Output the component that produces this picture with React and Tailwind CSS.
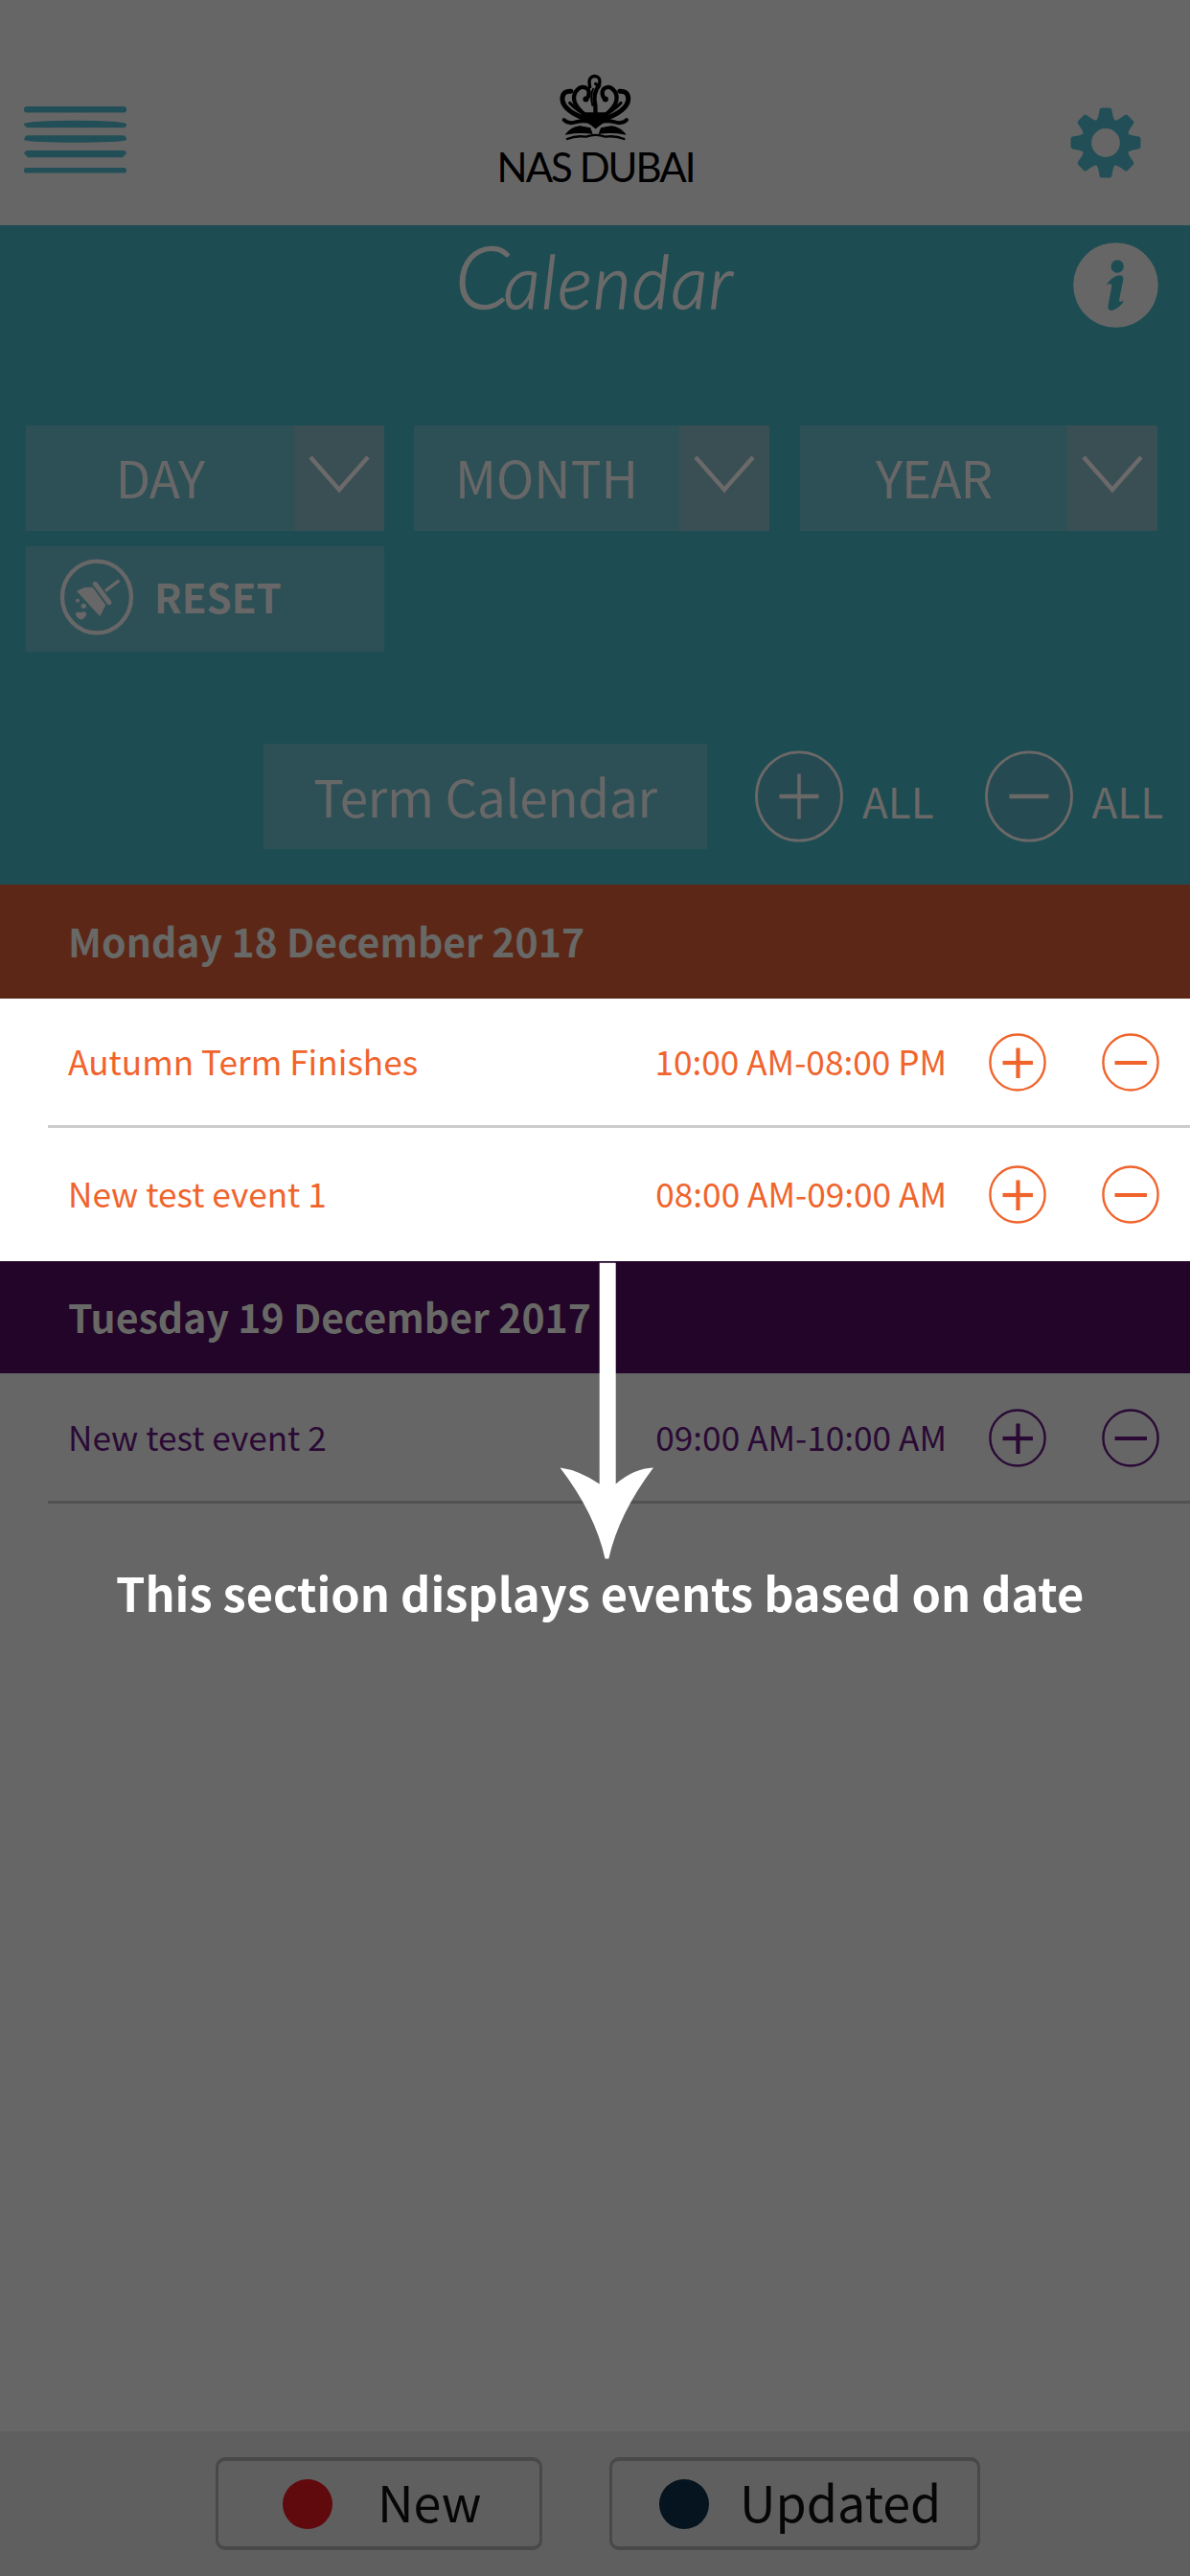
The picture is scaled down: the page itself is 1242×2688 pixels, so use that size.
import React from 'react';

const FONT = "font-['Noto_Sans_CJK_SC','Noto_Sans',sans-serif]";

function MenuIcon() {
  return (
    <svg width="110" height="72" viewBox="0 0 110 72" fill="#224f57">
      <rect x="1" y="2" width="107" height="6.5" rx="3" />
      <path d="M1 20Q8 17 55 16.8Q101 17 108 20Q108 24.3 105 24.3H5Q1 23 1 20Z" />
      <path d="M4 32.3H105Q108 33 108 37Q101 39.7 55 39.7Q8 39.7 1 37Q2 33 4 32.3Z" />
      <path d="M4 48H105Q108 48.5 108 51L104 55.3H5L1 51Q2 48.5 4 48Z" />
      <rect x="1" y="66" width="107" height="5.6" rx="2.6" />
    </svg>
  );
}

function Crown() {
  return (
    <svg width="76" height="70" viewBox="305 50 230 212" fill="none" stroke="#000" strokeLinecap="round">
      <path d="M404 92Q396 60 418 57Q437 58 435 78Q431 90 422 82" strokeWidth="10" />
      <path d="M433 86Q412 112 421 150L422 190" strokeWidth="13" />
      <path d="M414 98Q404 120 412 150" strokeWidth="6" />
      <path d="M405 192Q338 146 358 108Q376 82 397 98Q406 112 394 130" strokeWidth="13" />
      <path d="M437 192Q504 146 484 108Q466 82 447 98Q438 112 450 130" strokeWidth="13" />
      <path d="M398 196Q320 168 317 132Q315 104 344 105" strokeWidth="15" />
      <path d="M444 196Q522 168 525 132Q527 104 498 105" strokeWidth="15" />
      <path d="M404 186Q366 170 340 142" strokeWidth="9" />
      <path d="M438 186Q476 170 502 142" strokeWidth="9" />
      <circle cx="391" cy="130" r="9" fill="#000" stroke="none" />
      <circle cx="453" cy="130" r="9" fill="#000" stroke="none" />
      <path d="M388 172H454L442 208L422 224L402 208Z" fill="#000" stroke="none" />
      <path d="M322 196Q336 210 362 202Q386 196 408 204" strokeWidth="12" />
      <path d="M520 196Q506 210 480 202Q456 196 434 204" strokeWidth="12" />
      <path d="M330 240Q344 220 372 216L404 222L410 238Q372 232 330 240Z" fill="#000" strokeWidth="4" />
      <path d="M514 240Q500 220 472 216L440 222L434 238Q472 232 514 240Z" fill="#000" strokeWidth="4" />
      <path d="M332 256Q360 244 392 249Q422 238 452 249Q484 244 512 256" strokeWidth="7" />
    </svg>
  );
}

const TEETH = [0, 45, 90, 135, 180, 225, 270, 315];

function GearIcon() {
  return (
    <svg width="74" height="74" viewBox="-37 -37 74 74" fill="#224f57">
      {TEETH.map((a) => (
        <path key={a} transform={`rotate(${a})`} d="M-12.5 -20Q-8 -24 -7.2 -30L-6.4 -34.5Q-6 -36.5 -4 -36.5H4Q6 -36.5 6.4 -34.5L7.2 -30Q8 -24 12.5 -20Z" />
      ))}
      <circle r="19.7" fill="none" stroke="#224f57" strokeWidth="9.6" />
    </svg>
  );
}

function InfoIcon() {
  return (
    <svg width="89" height="89" viewBox="0 0 89 89">
      <circle cx="44.5" cy="44.5" r="44.3" fill="#666" />
      <circle cx="46.2" cy="25" r="6.7" fill="#1d4d52" />
      <path d="M34.5 44.5Q40 35.5 48.5 34.3Q53 34.5 52.3 39L48 60.5Q48.5 63 53 60.5Q50 67.5 41 71Q36 71.5 36.5 66L40.5 44.5Q39 41.5 34.5 44.5Z" fill="#1d4d52" />
    </svg>
  );
}

function ResetIcon() {
  return (
    <svg width="78" height="80" viewBox="186 457 234 240" fill="#686767">
      <ellipse cx="303" cy="577" rx="108" ry="112" fill="none" stroke="#686767" strokeWidth="13" />
      <path d="M240 558L264 547L290 546L331 602L313 638Z" />
      <path d="M298 536L342 594" stroke="#686767" strokeWidth="15" strokeLinecap="round" />
      <path d="M330 558L373 525" stroke="#686767" strokeWidth="10" />
      <path d="M296 549L334 601" stroke="#2d5056" strokeWidth="3" />
      <path d="M236 628Q244 620 252 626Q264 618 271 628Q270 642 254 648Q238 642 236 628Z" />
      <circle cx="262" cy="605" r="8" />
      <circle cx="243" cy="588" r="6" />
    </svg>
  );
}

function Select({ label, width, className }) {
  return (
    <div className={`flex h-[110px] bg-[#2d5056] ${width}`}>
      <div className={`flex flex-1 items-center justify-center pb-1 text-[53px] leading-none text-[#686767] ${className}`}>{label}</div>
      <div className="flex w-[94px] items-center justify-center bg-[#394f54] pb-2">
        <svg width="66" height="42" viewBox="0 0 66 42" fill="none" stroke="#6b6969" strokeWidth="4.5">
          <path d="M3 3L33 37L63 3" />
        </svg>
      </div>
    </div>
  );
}

function AllButton({ minus }) {
  return (
    <div className="flex items-center">
      <svg width="92" height="96" viewBox="0 0 92 96" stroke="#6b6868">
        <ellipse cx="46" cy="48" rx="44.5" ry="46.2" fill="#264a51" strokeWidth="2.8" />
        <path d="M25.5 48H66.5" strokeWidth="4.5" />
        {!minus && <path d="M46 24.5V71.5" strokeWidth="3.6" />}
      </svg>
      <span className="ml-[20px] mt-[7px] text-[44px] leading-none text-[#6b6868]">ALL</span>
    </div>
  );
}

function RoundButton({ minus }) {
  return (
    <svg width="60" height="61" viewBox="0 0 60 61" fill="none" stroke="currentColor">
      <ellipse cx="30" cy="30.5" rx="28.6" ry="29" strokeWidth="2.4" />
      <path d={minus ? 'M13.5 31H47' : 'M14.5 31H46'} strokeWidth="4.2" />
      {!minus && <path d="M30.5 15.5V47" strokeWidth="4.2" />}
    </svg>
  );
}

function DayHeader({ children, className }) {
  return (
    <div className={`flex items-center pb-[3px] pl-[71px] text-[41px] font-bold leading-none text-[#686866] ${className}`}>{children}</div>
  );
}

function EventRow({ title, time, className }) {
  return (
    <div className={`ml-[50px] flex items-center pl-[21px] pr-[32px] text-[35.2px] leading-none ${className}`}>
      <span className="flex-1 pb-[3px]">{title}</span>
      <span className="mr-[44px] pb-[3px]">{time}</span>
      <div className="flex gap-[58px]">
        <RoundButton />
        <RoundButton minus />
      </div>
    </div>
  );
}

function Legend({ label, dot, className }) {
  return (
    <div className={`flex h-[97px] items-center rounded-[10px] border-x-[3px] border-y-4 border-[#494949] text-[52px] leading-none text-[#060606] ${className}`}>
      <span className={`size-[52px] rounded-full ${dot}`} />
      <span className="pb-[5px]">{label}</span>
    </div>
  );
}

export default function App() {
  return (
    <div className={`relative flex h-[2688px] w-[1242px] flex-col overflow-hidden bg-[#666] ${FONT}`}>
      <header className="flex h-[235px] items-start justify-between pl-[24px] pr-[51px]">
        <div className="w-[167px] pt-[109px]"><MenuIcon /></div>
        <div className="flex flex-col items-center pt-[77px]">
          <Crown />
          <span className="mt-[3px] whitespace-nowrap font-['Lato',sans-serif] text-[42px] leading-[48px] tracking-[-2px] text-black">NAS DUBAI</span>
        </div>
        <div className="flex w-[139px] justify-end pt-[112px]"><GearIcon /></div>
      </header>

      <section className="h-[688px] bg-[#1d4d52]">
        <div className="flex h-[209px] items-start justify-between pl-[475px] pr-[33px]">
          <h1 className="flex items-baseline whitespace-nowrap pt-[2px] font-['Lato',sans-serif] text-[76px] font-light italic leading-[100px] tracking-[1.4px] text-[#6b6a6a] [-webkit-text-stroke:1.4px_#6b6a6a]">
            <span className="text-[90px] tracking-[-6px]">C</span>alendar
          </h1>
          <div className="pt-[18px]"><InfoIcon /></div>
        </div>
        <div className="flex pl-[27px]">
          <Select label="DAY" width="w-[374px]" className="tracking-[-1px]" />
          <div className="w-[31px]" />
          <Select label="MONTH" width="w-[371px]" className="" />
          <div className="w-[32px]" />
          <Select label="YEAR" width="w-[373px]" className="tracking-[-1px]" />
        </div>
        <div className="ml-[27px] mt-[16px] flex h-[110px] w-[374px] items-center bg-[#2d5056] pb-[5px] pl-[35px]">
          <ResetIcon />
          <span className="ml-[21px] pb-px text-[42px] font-bold leading-none text-[#686767]">RESET</span>
        </div>
        <div className="mt-[96px] flex items-center">
          <div className="ml-[275px] flex h-[110px] w-[463px] items-center justify-center pb-[2px] bg-[#2d5056] text-[53px] leading-none tracking-[-0.3px] text-[#686767]">Term Calendar</div>
          <div className="ml-[50px]"><AllButton /></div>
          <div className="ml-[53px]"><AllButton minus /></div>
        </div>
      </section>

      <DayHeader className="h-[119px] bg-[#5c2716]">Monday 18 December 2017</DayHeader>
      <div className="bg-white">
        <EventRow title="Autumn Term Finishes" time="10:00 AM-08:00 PM" className="h-[135px] border-b-[3px] border-[#cdcdd0] text-[#f0642c]" />
        <EventRow title="New test event 1" time="08:00 AM-09:00 AM" className="h-[139px] text-[#f0642c]" />
      </div>
      <DayHeader className="h-[117px] bg-[#220528]">Tuesday 19 December 2017</DayHeader>
      <EventRow title="New test event 2" time="09:00 AM-10:00 AM" className="h-[136px] border-b-[3px] border-[#525252] pt-px text-[#2a0a35]" />

      <p className="flex-1 whitespace-nowrap pl-[121px] pt-[68px] text-[48.7px] font-bold leading-none text-white">This section displays events based on date</p>

      <footer className="flex h-[151px] items-start bg-[#5f5f5f] pl-[225px] pt-[27px]">
        <Legend label="New" dot="bg-[#600a0d] mr-[47px]" className="w-[341px] pl-[67px]" />
        <Legend label="Updated" dot="bg-[#05141f] mr-[32px]" className="ml-[70px] w-[387px] pl-[49px]" />
      </footer>

      <svg className="absolute left-[584px] top-[1317px]" width="98" height="310" viewBox="0 0 98 310" fill="#fff">
        <path d="M41.7 0.7H58.7V231.5Q78 215 98 214.5Q62 262 51.3 309.5H47.5Q37 262 0.5 214.5Q20 217 41.7 231.5Z" />
      </svg>
    </div>
  );
}
